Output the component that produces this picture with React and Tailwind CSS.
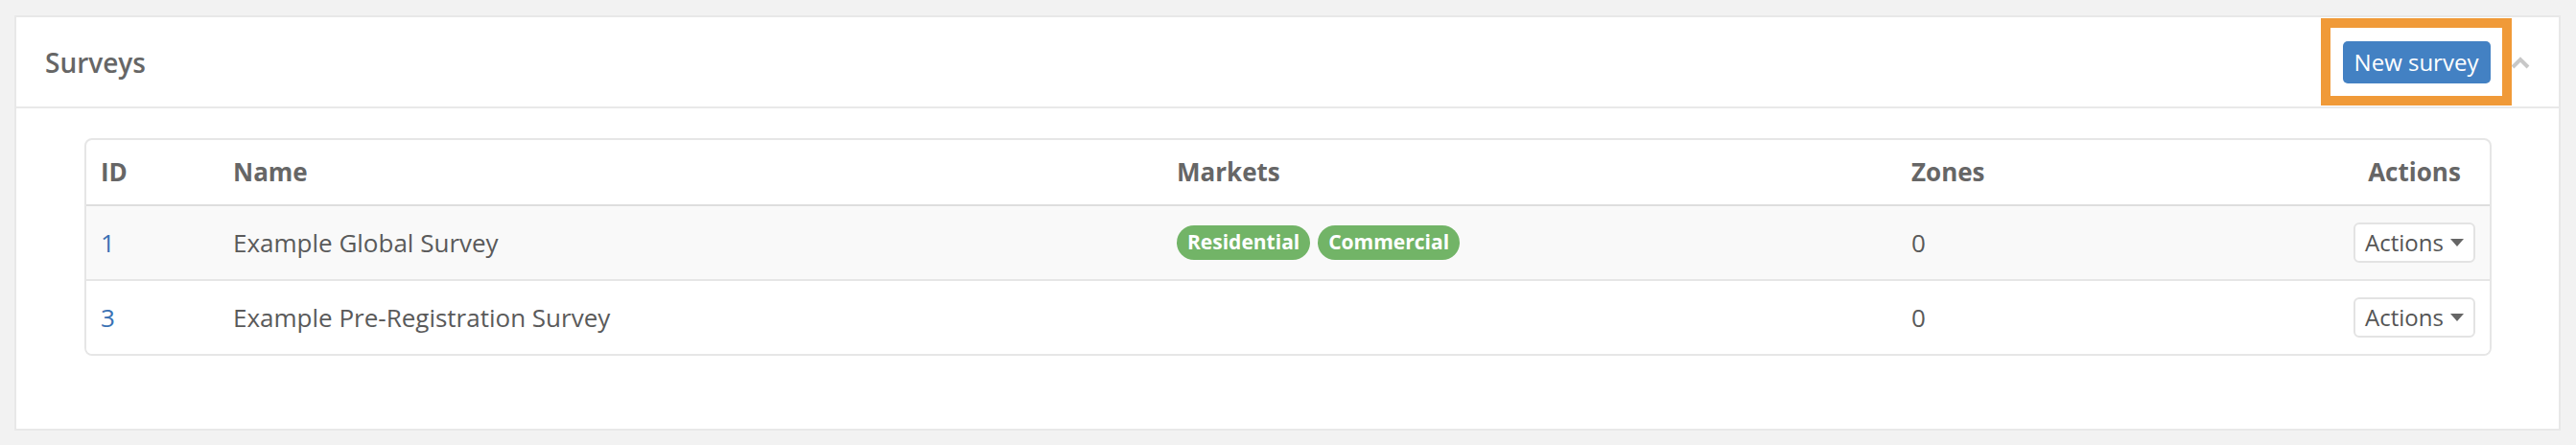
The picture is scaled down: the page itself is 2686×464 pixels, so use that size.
import React from 'react';

const surveys = [
  { id: 1, name: 'Example Global Survey', markets: ['Residential', 'Commercial'], zones: 0 },
  { id: 3, name: 'Example Pre-Registration Survey', markets: [], zones: 0 },
];

// small dropdown caret, like bootstrap's .caret
const Caret = () => (
  <svg width="14" height="8" viewBox="0 0 14 8" className="ml-[7px]">
    <path d="M0 0 L14 0 L7 8 Z" fill="#666" />
  </svg>
);

const ActionsButton = () => (
  <button className="flex h-[42px] w-[127px] items-center rounded-[6px] border-2 border-[#e3e3e3] bg-white pl-[10px] text-[24px] text-[#555]">
    Actions
    <Caret />
  </button>
);

const cell = 'flex items-center px-[15px]';

export default function App() {
  return (
    <div className="min-h-screen bg-[#f2f2f2] pl-[15px] pr-[16px] pt-[16px] font-['Open_Sans',sans-serif]">
      <section className="h-[433px] border-2 border-[#e8e8e8] bg-white">
        <header className="flex h-[95px] items-center justify-between border-b-2 border-[#e9e9e9] pl-[30px] pr-[30px]">
          <h1 className="text-[28px] font-semibold text-[#666]">Surveys</h1>
          <div className="flex items-center">
            <div className="flex h-[91px] w-[199px] items-center justify-center border-[10px] border-[#f09a38]">
              <button className="h-[44px] w-[154px] rounded-[5px] bg-[#4381c3] text-[24px] text-white">
                New survey
              </button>
            </div>
            <svg width="20" height="14" viewBox="0 0 20 14" className="-ml-px">
              <polyline points="2,12 10,4 18,12" fill="none" stroke="#c8c8c8" strokeWidth="4" />
            </svg>
          </div>
        </header>

        <div className="pl-[71px] pr-[70px] pt-[31px]">
          <div className="overflow-hidden rounded-[8px] border-2 border-[#e6e6e6]">
            <div className="grid grid-cols-[138px_984px_766px_1fr_157px]">
              <div className="col-span-5 grid h-[69px] grid-cols-subgrid border-b-2 border-[#dedede] text-[26px] font-bold text-[#666]">
                <div className={cell}>ID</div>
                <div className={cell}>Name</div>
                <div className={cell}>Markets</div>
                <div className={cell}>Zones</div>
                <div className={`${cell} justify-center`}>Actions</div>
              </div>
              {surveys.map((s, i) => (
                <div
                  key={s.id}
                  className={`col-span-5 grid grid-cols-subgrid text-[26px] text-[#5a5a5a] ${
                    i === 0 ? 'h-[78px] border-b-2 border-[#e6e6e6] bg-[#f9f9f9]' : 'h-[76px] bg-white'
                  }`}
                >
                  <div className={cell}>
                    <a className="text-[#3a72b4]">{s.id}</a>
                  </div>
                  <div className={cell}>{s.name}</div>
                  <div className={`${cell} gap-[8px]`}>
                    {s.markets.map((m) => (
                      <span
                        key={m}
                        className="flex h-[36px] items-center rounded-full bg-[#72b467] px-[11px] text-[21px] font-bold text-white"
                      >
                        {m}
                      </span>
                    ))}
                  </div>
                  <div className={cell}>{s.zones}</div>
                  <div className={`${cell} justify-center`}>
                    <ActionsButton />
                  </div>
                </div>
              ))}
            </div>
          </div>
        </div>
      </section>
    </div>
  );
}
